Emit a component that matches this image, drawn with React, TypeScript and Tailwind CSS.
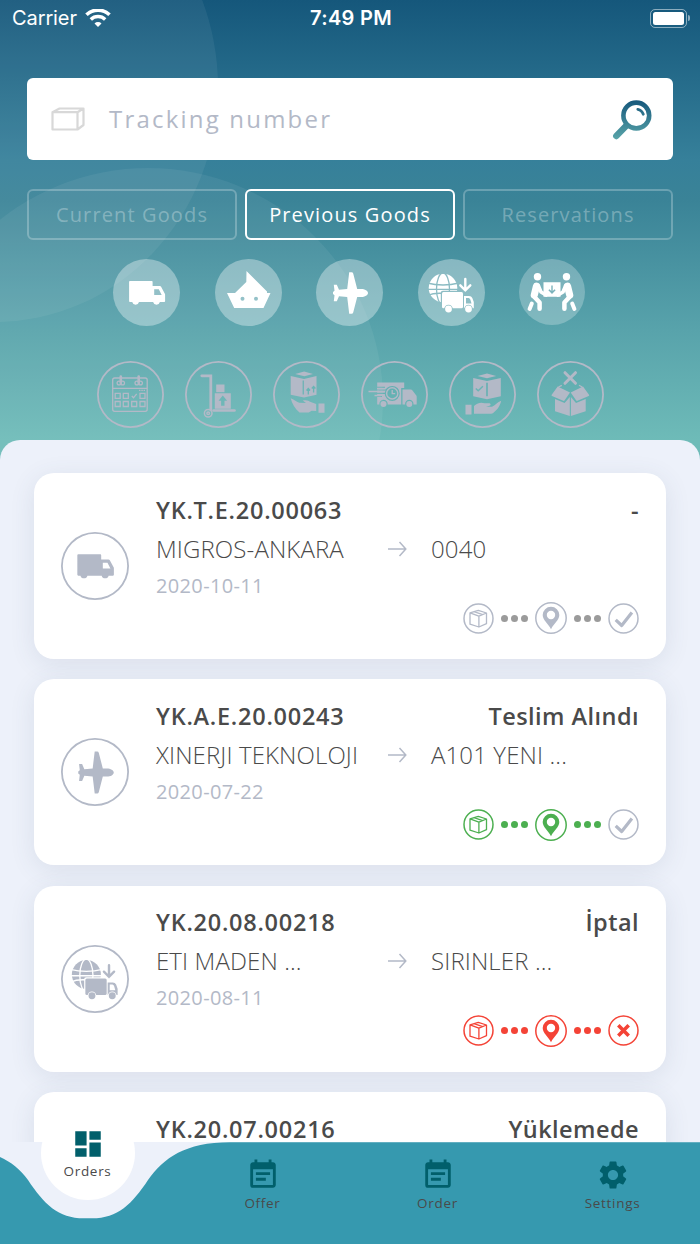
import React from "react";
import { MdDashboard, MdEventNote, MdSettings } from "react-icons/md";

type IconProps = { className?: string };

/* ---------- transport icons (67x67 canvas) ---------- */

const TruckIcon = ({ className }: IconProps) => (
    <svg viewBox="0 0 67 67" className={className} fill="currentColor">
        <path
            fillRule="evenodd"
            d="M17 22h21.800q.8 0 .8.8V27h7.200q.8 0 1.300.8l3.600 6.600q.4.6.4 1.200v6.600q0 .8-.8.8h-4.400a3.500 3.500 0 0 1-6.800 0H26a3.500 3.500 0 0 1-6.800 0H17q-.9 0-.9-.8V22.800q0-.8.9-.8zM41.200 30.300v5.600h7.500l-2.900-5.600z"
        />
    </svg>
);

const ShipIcon = ({ className }: IconProps) => (
    <svg viewBox="0 0 67 67" className={className} fill="currentColor">
        <path
            fillRule="evenodd"
            d="M31.500 12 52 32.500V34h3.500L48.500 49H19.200L12 34h8L31.300 23zM27.500 37.700a2 2 0 1 0 0 4 2 2 0 0 0 0-4zM41 37.700a2 2 0 1 0 0 4 2 2 0 0 0 0-4z"
        />
    </svg>
);

const PlaneIcon = ({ className }: IconProps) => (
    <svg viewBox="0 0 67 67" className={className} fill="currentColor">
        <path d="M52 34c0 2.300-3 4-7 4h-3.800L37.200 53.500q-.4 1.300-1.600 1.300h-2.400L31.200 38 23 37.300 20.800 42.300H17.800L18.500 36.200 17 35v-2l1.500-1.200-.7-6.100h3L23 30.700l8.200-.7 2-16.800h2.400q1.200 0 1.600 1.300L41.200 30H45c4 0 7 1.700 7 4z" />
    </svg>
);

const GlobeTruckIcon = ({ className }: IconProps) => (
    <svg viewBox="0 0 67 67" className={className}>
        <mask id="globe-cut">
            <rect width="67" height="67" fill="#fff" />
            <g fill="none" stroke="#000" strokeWidth="1.300">
                <ellipse cx="25" cy="30" rx="6.500" ry="16" />
                <path d="M9 24Q25 28 41 24M9 30.300h32M9 36.500Q17 33.500 26 34.500" />
            </g>
            <rect x="22.800" y="31.800" width="24" height="20" rx="2" fill="#000" />
        </mask>
        <circle cx="25" cy="29" r="14.300" fill="currentColor" mask="url(#globe-cut)" />
        <mask id="cab-cut">
            <rect width="67" height="67" fill="#fff" />
            <circle cx="30.500" cy="50" r="4.300" fill="#000" />
            <circle cx="50.500" cy="50" r="4.300" fill="#000" />
        </mask>
        <g fill="currentColor">
            <g mask="url(#cab-cut)">
                <rect x="24" y="33" width="21" height="16.300" rx="1.500" />
                <path fillRule="evenodd" d="M46 37h5q2.400 0 3.300 2l1.500 4v5.800q0 .5-.5.5H46zM48 39v5.500h5.500l-1.200-4q-.6-1.500-1.600-1.500z" />
            </g>
            <circle cx="30.500" cy="50" r="3.400" />
            <circle cx="50.500" cy="50" r="3.400" />
        </g>
        <path d="M47.300 20v11.300M42.300 26.300l5 5 5-5" fill="none" stroke="currentColor" strokeWidth="2.400" strokeLinecap="round" />
    </svg>
);

const Carrier = () => (
    <g fill="none" stroke="currentColor" strokeLinecap="round" strokeLinejoin="round">
        <circle cx="18.500" cy="17.700" r="3.700" fill="currentColor" stroke="none" />
        <path d="M17.500 27.200 15.300 36" strokeWidth="7.200" />
        <path d="M15.500 38 20.600 43.500v6.200" strokeWidth="4.500" />
        <path d="M19.500 27 22 33l5 3" strokeWidth="3.600" />
        <path d="M12.800 44.500 10.600 50" strokeWidth="4" />
    </g>
);

const HandoverIcon = ({ className }: IconProps) => (
    <svg viewBox="0 0 66 66" className={className}>
        <Carrier />
        <g transform="matrix(-1 0 0 1 66 0)">
            <Carrier />
        </g>
        <path
            fill="currentColor"
            fillRule="evenodd"
            d="M24.500 23.300h17v14.400h-17zM32.300 26.500v5.600l-1.900-1.800-1 1L33 35l3.600-3.700-1-1-1.900 1.800v-5.600z"
        />
    </svg>
);

/* ---------- status filter icons ---------- */

const CalendarIcon = ({ className }: IconProps) => (
    <svg viewBox="0 0 67 67" className={className} fill="none" stroke="currentColor" strokeWidth="1.300">
        <rect x="15.700" y="17" width="34.500" height="33.300" rx="2" />
        <path d="M16 27.300h34" />
        <path d="M42 29.300h6" strokeDasharray="1.500 .8" />
        <path d="M23.800 15.500v6.500M41.700 15.500v6.500" strokeWidth="2.600" strokeLinecap="round" />
        <circle cx="22" cy="22" r="1.900" />
        <circle cx="25.600" cy="22" r="1.900" />
        <circle cx="39.900" cy="22" r="1.900" />
        <circle cx="43.500" cy="22" r="1.900" />
        <path d="M18.200 32.300h5v5h-5zM26.300 32.300h5v5h-5zM43 32.300h5v5h-5zM18.200 40.500h5v5h-5zM26.300 40.500h5v5h-5zM34.700 40.500h5v5h-5zM43 40.500h5v5h-5z" />
        <path d="m34.800 35 1.700 1.800 3.200-4" />
    </svg>
);

const HandTruckIcon = ({ className }: IconProps) => (
    <svg viewBox="0 0 67 67" className={className}>
        <g fill="none" stroke="currentColor">
            <path d="M16.800 14.800h9v34" strokeWidth="2.800" strokeLinecap="round" />
            <path d="M28.500 49.500h21" strokeWidth="2.600" strokeLinecap="round" />
            <circle cx="23.200" cy="52.200" r="3.800" strokeWidth="1.500" />
            <circle cx="23.200" cy="52.200" r="1.300" strokeWidth="1.500" />
        </g>
        <path fill="currentColor" d="M31.200 23.500h8.300v7.700h-8.300z" />
        <path
            fill="currentColor"
            fillRule="evenodd"
            d="M29.800 32.200h16v15.500h-16zM37.800 34.500l-4.300 5.200h2.600v5h3.400v-5h2.600z"
        />
    </svg>
);

const PickupIcon = ({ className }: IconProps) => (
    <svg viewBox="0 0 67 67" className={className} fill="currentColor">
        <path d="m22.200 12.900 9-2.400 8.800 2.400-8.700 2.400z" />
        <path fillRule="evenodd" d="m17.700 14.900 13.300 3 12.500-3v18.800L31 36.500l-13.300-2.800zM29.600 19.500v14h1.300v-14z" />
        <path
            d="M35.300 33.500v-6m-1.800 2 1.800-2 1.800 2M40.600 31.500v-6m-1.800 2 1.800-2 1.800 2"
            fill="none"
            stroke="#69b4b5"
            strokeWidth="1.300"
        />
        <path d="M17.700 37.300c3 .8 5.500 3.500 8.500 4.500l6.800.2-3.300-2.400c3-1 6-.3 8 1.500l5.500 1.800v7l-4.500-.2-3 1.800H26.500c-4.500-3.500-7.500-9-8.800-14.200zM45.500 42.500h6v9.300h-6z" />
    </svg>
);

const ExpressIcon = ({ className }: IconProps) => (
    <svg viewBox="0 0 67 67" className={className} fill="currentColor">
        <mask id="express-cut">
            <rect width="67" height="67" fill="#fff" />
            <circle cx="31.200" cy="32.400" r="7.500" fill="#000" />
            <circle cx="22.500" cy="43" r="4.200" fill="#000" />
            <circle cx="48.300" cy="43" r="4.200" fill="#000" />
            <path d="M15 26.300h9M15 29h10M15 32.300h9M15 35.500h6" stroke="#000" strokeWidth="1.200" />
        </mask>
        <g mask="url(#express-cut)">
            <path d="M16.200 21.500h27v5.500h-3v16.500h-24z" />
            <path d="M41.500 28.500h8.300q1 0 1.500.8l4 5.200q.4.500.4 1.200v7.800H41.500z" />
        </g>
        <circle cx="22.500" cy="43" r="3" />
        <circle cx="48.300" cy="43" r="3" />
        <g fill="none" stroke="currentColor">
            <circle cx="31.200" cy="32.400" r="5.600" strokeWidth="1.400" />
            <path d="M31.200 29v3.700h3" strokeWidth="1.300" />
            <path d="M7.500 30.500H18M13.500 34.500H20M16 27.500h8" strokeWidth="1.300" />
        </g>
    </svg>
);

const DeliveredIcon = ({ className }: IconProps) => (
    <svg viewBox="0 0 67 67" className={className} fill="currentColor">
        <path d="m28.500 15 9.500-2.500 9.200 2.500-9.200 2.300z" />
        <path fillRule="evenodd" d="m24.200 17 13.800 3 13.800-3v18.300L38 38.300l-13.800-3zM37.200 21.800v13.400h1.600V21.800z" />
        <path d="m26.800 27.500 2.400 2.300 4.700-4.600" fill="none" stroke="#69b4b5" strokeWidth="1.400" />
        <path d="M16.500 43.800h6v9.700h-6zM25 45c4-3.500 7.500-4 10.500-2.700h5c1.500.3 1.500 2.200 0 2.500l-3.500.9h6c3-1.200 5.500-4.500 9.200-5.900-.8 5-4.300 9.300-8 12.200-1 .7-3 .8-5 .8H25z" />
    </svg>
);

const CancelledIcon = ({ className }: IconProps) => (
    <svg viewBox="0 0 67 67" className={className} fill="currentColor">
        <path d="m28 11.700 10.500 10.600M38.500 11.700 28 22.300" stroke="currentColor" strokeWidth="3" strokeLinecap="round" />
        <path d="m20.700 25.500 12.300 6-5.500 8q-.5.600-1.300.3L15 35q-.8-.5-.3-1.300zM46 25.500l-12.300 6 5.500 8q.5.600 1.300.3L51.700 35q.8-.5.3-1.300z" />
        <path d="m18 38 9.600 4L32.800 36v19L18 50.300zM48.700 38 39 42 33.900 36v19l14.800-4.700z" />
        <path d="m21.500 26 3.300-1.700M45.200 26 42 24.300" stroke="currentColor" strokeWidth="1.300" />
    </svg>
);

/* ---------- order progress ---------- */

const PackageStep = () => (
    <svg viewBox="0 0 31 31" className="size-[31px]" fill="none" stroke="currentColor" strokeWidth="1.500" strokeLinejoin="round">
        <circle cx="15.500" cy="15.500" r="14.500" />
        <path d="m15.300 7.300-8.300 2.600v11.300L15.900 24l7.600-3.300V10zM7 9.900l8.900 3.300L23.500 10M15.900 13.200V24M11 8.700l8.700 3" strokeWidth="1.300" />
    </svg>
);

const PinStep = () => (
    <svg viewBox="0 0 32 32" className="size-8">
        <circle cx="16" cy="16" r="15.200" fill="none" stroke="currentColor" strokeWidth="1.500" />
        <path
            fill="currentColor"
            fillRule="evenodd"
            d="M16 4.800a8.300 8.300 0 0 1 8.300 8.300c0 5-5.300 8.300-8.300 14.200C13 21.400 7.700 18.100 7.700 13.100A8.300 8.300 0 0 1 16 4.800zm0 4a4.200 4.200 0 1 0 0 8.400 4.200 4.200 0 0 0 0-8.400z"
        />
    </svg>
);

const EndStep = ({ failed }: { failed?: boolean }) => (
    <svg viewBox="0 0 31 31" className="size-[31px]" fill="none" stroke="currentColor" strokeWidth="1.500">
        <circle cx="15.500" cy="15.500" r="14.500" />
        {failed ? (
            <path d="m10.300 10.300 10.400 10.400M20.700 10.300 10.300 20.700" strokeWidth="3.600" />
        ) : (
            <path d="m7.700 16.800 6 5.700 10.200-13" strokeWidth="3.200" strokeLinejoin="round" />
        )}
    </svg>
);

const Dots = () => (
    <div className="flex w-[41px] justify-center gap-[3.300px]">
        <span className="size-[7px] rounded-full bg-current" />
        <span className="size-[7px] rounded-full bg-current" />
        <span className="size-[7px] rounded-full bg-current" />
    </div>
);

/* ---------- data ---------- */

const transports = [
    { id: 1, icon: TruckIcon },
    { id: 2, icon: ShipIcon },
    { id: 3, icon: PlaneIcon },
    { id: 4, icon: GlobeTruckIcon },
];

const statuses = [
    { id: 1, icon: CalendarIcon },
    { id: 2, icon: HandTruckIcon },
    { id: 3, icon: PickupIcon },
    { id: 4, icon: ExpressIcon },
    { id: 5, icon: DeliveredIcon },
    { id: 6, icon: CancelledIcon },
];

const orders = [
    {
        code: "YK.T.E.20.00063",
        status: "-",
        from: "MIGROS-ANKARA",
        to: "0040",
        date: "2020-10-11",
        icon: TruckIcon,
        step: "text-[#b3b9c7]",
        dots: "text-[#9b9b9b]",
        end: "text-[#b3b9c7]",
        failed: false,
    },
    {
        code: "YK.A.E.20.00243",
        status: "Teslim Alındı",
        from: "XINERJI TEKNOLOJI",
        to: "A101 YENI ...",
        date: "2020-07-22",
        icon: PlaneIcon,
        step: "text-[#4caf50]",
        dots: "text-[#4caf50]",
        end: "text-[#b3b9c7]",
        failed: false,
    },
    {
        code: "YK.20.08.00218",
        status: "İptal",
        from: "ETI MADEN ...",
        to: "SIRINLER ...",
        date: "2020-08-11",
        icon: GlobeTruckIcon,
        step: "text-[#f44336]",
        dots: "text-[#f44336]",
        end: "text-[#f44336]",
        failed: true,
    },
    {
        code: "YK.20.07.00216",
        status: "Yüklemede",
        from: "",
        to: "",
        date: "",
        icon: TruckIcon,
        step: "text-[#4caf50]",
        dots: "text-[#4caf50]",
        end: "text-[#b3b9c7]",
        failed: false,
    },
];

const tabs = [
    { label: "Offer", icon: MdEventNote },
    { label: "Order", icon: MdEventNote },
    { label: "Settings", icon: MdSettings },
];

/* ---------- sections ---------- */

const StatusBar = () => (
    <div className="flex h-9 items-center justify-between px-[10px] font-['Inter'] text-[20px] text-white">
        <div className="flex flex-1 items-center gap-[8px] pl-[2px]">
            <span className="tracking-[-0.1px]">Carrier</span>
            <svg viewBox="0 0 26 19" className="h-[19px] w-[26px]" fill="none" stroke="#fff">
                <path d="M1.500 5.800a16.500 16.500 0 0 1 23 0" strokeWidth="3.600" />
                <path d="M5.800 10.500a10.300 10.300 0 0 1 14.400 0" strokeWidth="3.400" />
                <path d="M13 18 9.500 14.500a5 5 0 0 1 7 0z" fill="#fff" stroke="none" />
            </svg>
        </div>
        <span className="font-semibold tracking-[0.3px]">7:49 PM</span>
        <div className="flex flex-1 items-center justify-end gap-[1.500px]">
            <div className="h-[19px] w-[37px] rounded-[5px] border-[1.500px] border-white/50 p-[2px]">
                <div className="h-full rounded-[2.500px] bg-white" />
            </div>
            <div className="h-[6px] w-[2px] rounded-r-full bg-white/50" />
        </div>
    </div>
);

const SearchBox = () => (
    <div className="mx-[27px] mt-[42.300px] flex h-[81.300px] items-center rounded-[6px] bg-white pl-[24px] pr-[21px]">
        <svg viewBox="0 0 34 24" className="h-[24px] w-[34px]" fill="none" stroke="#d8d8d8" strokeWidth="2.200" strokeLinejoin="round">
            <path d="M1.500 5.200h25v17.300h-25zM1.500 5.200 8.500 1.500h24l-6 3.700M32.500 1.500V18l-6 4.500" />
        </svg>
        <span className="ml-[24px] flex-1 text-[24px] tracking-[2.200px] text-[#b3b9c7]">Tracking number</span>
        <svg viewBox="0 0 40 40" className="mt-[2px] size-10">
            <defs>
                <linearGradient id="lens" x1="0" y1="0" x2="0" y2="40" gradientUnits="userSpaceOnUse">
                    <stop stopColor="#15577b" />
                    <stop offset="1" stopColor="#5aa6aa" />
                </linearGradient>
            </defs>
            <g fill="none" stroke="url(#lens)" strokeLinecap="round">
                <circle cx="24.300" cy="15.500" r="12.900" strokeWidth="4.600" />
                <path d="M14 26 4.300 36" strokeWidth="6.400" />
                <path d="M25.800 9.300q4 .8 5.500 5" strokeWidth="2.800" />
            </g>
        </svg>
    </div>
);

const Header = () => (
    <header className="relative h-[440px]">
        <StatusBar />
        <SearchBox />
        <div className="mx-[27px] mt-[29.400px] grid grid-cols-3 gap-2 text-center text-[20px] leading-[48px] tracking-[1.130px]">
            <div className="h-[51px] rounded-[6px] border-2 border-white/25 text-white/30">Current Goods</div>
            <div className="h-[51px] rounded-[6px] border-2 border-white text-white">Previous Goods</div>
            <div className="h-[51px] rounded-[6px] border-2 border-white/25 text-white/30">Reservations</div>
        </div>
        <div className="mt-[19px] flex items-center justify-center gap-[34.500px] pr-[1.500px] text-white">
            {transports.map((item) => (
                <div key={item.id} className="size-[67px] rounded-full bg-white/35">
                    <item.icon className="size-full" />
                </div>
            ))}
            <div className="size-[66px] rounded-full bg-white/25">
                <HandoverIcon className="size-full" />
            </div>
        </div>
        <div className="mt-[35px] flex justify-center gap-[21px] text-[#b3b9c7]">
            {statuses.map((item) => (
                <div key={item.id} className="size-[67px] rounded-full shadow-[inset_0_0_0_1.8px_#b3b9c7]">
                    <item.icon className="size-full" />
                </div>
            ))}
        </div>
    </header>
);

const OrderCard = ({ order }: { order: (typeof orders)[number] }) => (
    <div className="flex h-[186px] shrink-0 rounded-[20px] bg-white pl-[27px] pr-[27px] shadow-[0_5px_26px_rgba(60,85,110,0.11)]">
        <div className="mr-[27px] size-[68px] shrink-0 self-center rounded-full text-[#b3b9c7] shadow-[inset_0_0_0_1.8px_#b3b9c7]">
            <order.icon className="size-full" />
        </div>
        <div className="flex flex-1 flex-col pt-[17.700px] text-[#4a4a4a]">
            <div className="flex justify-between text-[23.500px] font-semibold leading-[39px]">
                <span className="tracking-[0.740px]">{order.code}</span>
                <span className="tracking-[0.450px]">{order.status}</span>
            </div>
            <div className="flex items-center text-[24px] font-light leading-[38px] tracking-[0.120px]">
                <span className="w-[232px]">{order.from}</span>
                <svg viewBox="0 0 19 16" className="h-[16px] w-[19px]" fill="none" stroke="#b3b9c7" strokeWidth="1.500">
                    <path d="M0 8h17.500M11.500 1l6.300 7-6.300 7" />
                </svg>
                <span className="ml-[24px]">{order.to}</span>
            </div>
            <div className="h-[34.500px] text-[20px] leading-[36px] tracking-[0.350px] text-[#b3b9c7]">{order.date}</div>
            <div className="flex items-center justify-end">
                <div className={order.step}><PackageStep /></div>
                <div className={order.dots}><Dots /></div>
                <div className={order.step}><PinStep /></div>
                <div className={order.dots}><Dots /></div>
                <div className={order.end}><EndStep failed={order.failed} /></div>
            </div>
        </div>
    </div>
);

const BottomNav = () => (
    <nav className="relative grid h-[102px] shrink-0 grid-cols-4 text-[13.500px] tracking-[0.700px] text-[#4a4a4a]">
        <svg viewBox="0 0 700 102" className="absolute inset-0 h-full w-full">
            <path fill="#edf1fa" d="M0 0h240v90H0z" />
            <path
                fill="#3699af"
                d="M700 .300H230C185 .300 164 16 148 38 132 62 118 76.300 92 76.300H84C58 76.300 44 62 28 38 20 27 11 20 0 15V102h700z"
            />
        </svg>
        {/* selected tab sits in the notch */}
        <div className="relative z-10 -mt-[36px] flex size-[94px] flex-col items-center justify-self-center rounded-full bg-white pt-[21px]">
            <MdDashboard size={34} color="#015f6b" />
            <span className="leading-[20px]">Orders</span>
        </div>
        {tabs.map((tab) => (
            <div key={tab.label} className="relative flex flex-col items-center pt-[16px]">
                <tab.icon size={34} color="#015f6b" />
                <span className="mt-px leading-[20px]">{tab.label}</span>
            </div>
        ))}
    </nav>
);

const App = () => {
    return (
        <div className="relative flex h-[1244px] w-[700px] flex-col overflow-hidden bg-[#edf1fa] font-['Open_Sans',sans-serif]">
            {/* header backdrop, also visible behind the rounded panel corners */}
            <div className="absolute inset-x-0 top-0 h-[470px] bg-[linear-gradient(#15577b_0px,#36809a_160px,#3a8397_200px,#58a3ab_330px,#6ebbb8_440px)]">
                <svg viewBox="0 0 700 470" className="h-full w-full" fill="#fff" fillOpacity=".06">
                    <ellipse cx="-5" cy="87" rx="223" ry="235" />
                    <ellipse cx="148" cy="400" rx="235" ry="232" />
                </svg>
            </div>
            <Header />
            <main className="relative flex min-h-0 flex-1 flex-col gap-[20.200px] overflow-hidden rounded-t-[20px] bg-[#edf1fa] px-[34px] pt-[33.300px]">
                {orders.map((order) => (
                    <OrderCard key={order.code} order={order} />
                ))}
            </main>
            <BottomNav />
        </div>
    );
};

export default App;
